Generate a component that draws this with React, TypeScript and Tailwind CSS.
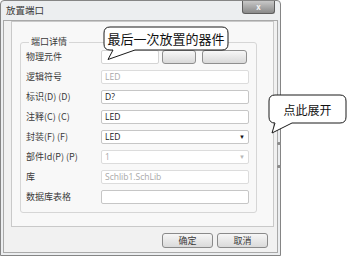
import React from "react";

type Row = {
  label: string;
  value?: string;
  muted?: boolean;
  select?: boolean;
};

const rows: Row[] = [
  { label: "逻辑符号", value: "LED", muted: true },
  { label: "标识(D) (D)", value: "D?" },
  { label: "注释(C) (C)", value: "LED" },
  { label: "封装(F) (F)", value: "LED", select: true },
  { label: "部件Id(P) (P)", value: "1", muted: true, select: true },
  { label: "库", value: "Schlib1.SchLib", muted: true },
  { label: "数据库表格", value: "" },
];

function Field({ row }: { row: Row }) {
  return (
    <div
      className={
        "w-[148px] h-[14px] flex items-center justify-between px-[3px] rounded-[2px] bg-white border font-['Open_Sans','Noto_Sans',sans-serif] text-[8.5px] " +
        (row.muted ? "border-[#dcdcdc] text-[#a8a8a8]" : "border-[#c6c6c6] text-[#1a1a1a]")
      }
    >
      <span>{row.value}</span>
      {row.select && (
        <span className={"text-[6px] " + (row.muted ? "text-[#b8b8b8]" : "text-[#111]")}>▼</span>
      )}
    </div>
  );
}

export default function App() {
  return (
    <div className="w-[348px] h-[258px] bg-white relative overflow-hidden font-['Noto_Sans_CJK_SC',sans-serif]">
      {/* dialog */}
      <div className="relative w-[281px] h-[256px] border border-[#858585] rounded-t-[4px] bg-[#eceef0] flex flex-col">
        <div className="h-[19px] flex items-start justify-between">
          <span className="pl-[5px] pt-[3px] text-[9.5px] leading-[12px] text-[#3a3a3a]">放置端口</span>
          <div className="mr-[5px] w-[33px] h-[13px] rounded-b-[3px] border border-t-0 border-[#5e5e5e] bg-gradient-to-b from-[#c8c8c8] to-[#8a8a8a] flex items-center justify-center text-[8px] leading-none text-[#f4f4f4] font-bold">
            x
          </div>
        </div>

        <div className="flex-1 mx-[2px] mb-[2px] border border-[#a9a9a9] bg-[#f1f1f1] flex flex-col">
          <div className="ml-[7px] mr-[3px] h-[206px] border border-[#c9c9c9] bg-[#f8f8f8]">
            <fieldset className="ml-[8px] mr-[16px] mt-[14px] h-[177px] border border-[#d6d6d6] rounded-[3px] pl-[5px] pr-[6px]">
              <legend className="ml-[3px] px-[2px] text-[9px] leading-[12px] text-[#3a3a3a]">端口详情</legend>
              <div className="pt-[2px] flex flex-col gap-[6px]">
                <div className="h-[14px] flex items-center">
                  <span className="w-[75px] text-[9px] text-[#3a3a3a]">物理元件</span>
                  <div className="w-[58px] h-[14px] bg-white border border-[#d4d4d4] rounded-[2px]" />
                  <div className="ml-[3px] w-[34px] h-[14px] rounded-[3px] border border-[#8f8f8f] bg-gradient-to-b from-[#f7f7f7] to-[#d9d9d9]" />
                  <div className="ml-[6px] w-[45px] h-[14px] rounded-[3px] border border-[#8f8f8f] bg-gradient-to-b from-[#f7f7f7] to-[#d9d9d9]" />
                </div>
                {rows.map((row) => (
                  <div key={row.label} className="h-[14px] flex items-center">
                    <span className="w-[75px] text-[9px] text-[#3a3a3a] whitespace-nowrap">{row.label}</span>
                    <Field row={row} />
                  </div>
                ))}
              </div>
            </fieldset>
          </div>

          <div className="mt-[6px] pr-[9px] flex justify-end gap-[4px]">
            <div className="w-[51px] h-[15px] rounded-[3px] border border-[#8a8a8a] bg-gradient-to-b from-[#f6f6f6] to-[#dadada] flex items-center justify-center text-[9px] text-[#3a3a3a]">
              确定
            </div>
            <div className="w-[51px] h-[15px] rounded-[3px] border border-[#8a8a8a] bg-gradient-to-b from-[#f6f6f6] to-[#dadada] flex items-center justify-center text-[9px] text-[#3a3a3a]">
              取消
            </div>
          </div>
        </div>

        {/* expander grip on the right edge */}
        <span className="absolute left-[276px] top-[141px] w-[4px] h-[3px] bg-[#8c8c8c] rounded-full" />
        <span className="absolute left-[276px] top-[164px] w-[4px] h-[3px] bg-[#8c8c8c] rounded-full" />
      </div>

      {/* callout: last placed part */}
      <div className="absolute left-[100px] top-[24px] w-[132px] h-[40px]">
        <svg width="132" height="40" className="absolute left-0 top-0">
          <path
            d="M 10 3 H 122 Q 128 3 128 9 V 20 Q 128 26 122 26 H 35 L 8 35.5 L 13 26 H 10 Q 4 26 4 20 V 9 Q 4 3 10 3 Z"
            fill="white"
            stroke="#1a1a1a"
            strokeWidth="1"
          />
        </svg>
        <div className="absolute left-[4px] top-[3px] w-[124px] h-[23px] flex items-center justify-center text-[13px] leading-none text-[#111]">
          最后一次放置的器件
        </div>
      </div>

      {/* callout: click to expand */}
      <div className="absolute left-[266px] top-[92px] w-[82px] h-[44px]">
        <svg width="82" height="44" className="absolute left-0 top-0">
          <path
            d="M 9 3 H 74 Q 80 3 80 9 V 25 Q 80 31 74 31 H 26 L 6 41 L 9 31 Q 3 31 3 25 V 9 Q 3 3 9 3 Z"
            fill="white"
            stroke="#1a1a1a"
            strokeWidth="1"
          />
        </svg>
        <div className="absolute left-[3px] top-[5px] w-[77px] h-[26px] flex items-center justify-center text-[12px] leading-none text-[#111]">
          点此展开
        </div>
      </div>
    </div>
  );
}
